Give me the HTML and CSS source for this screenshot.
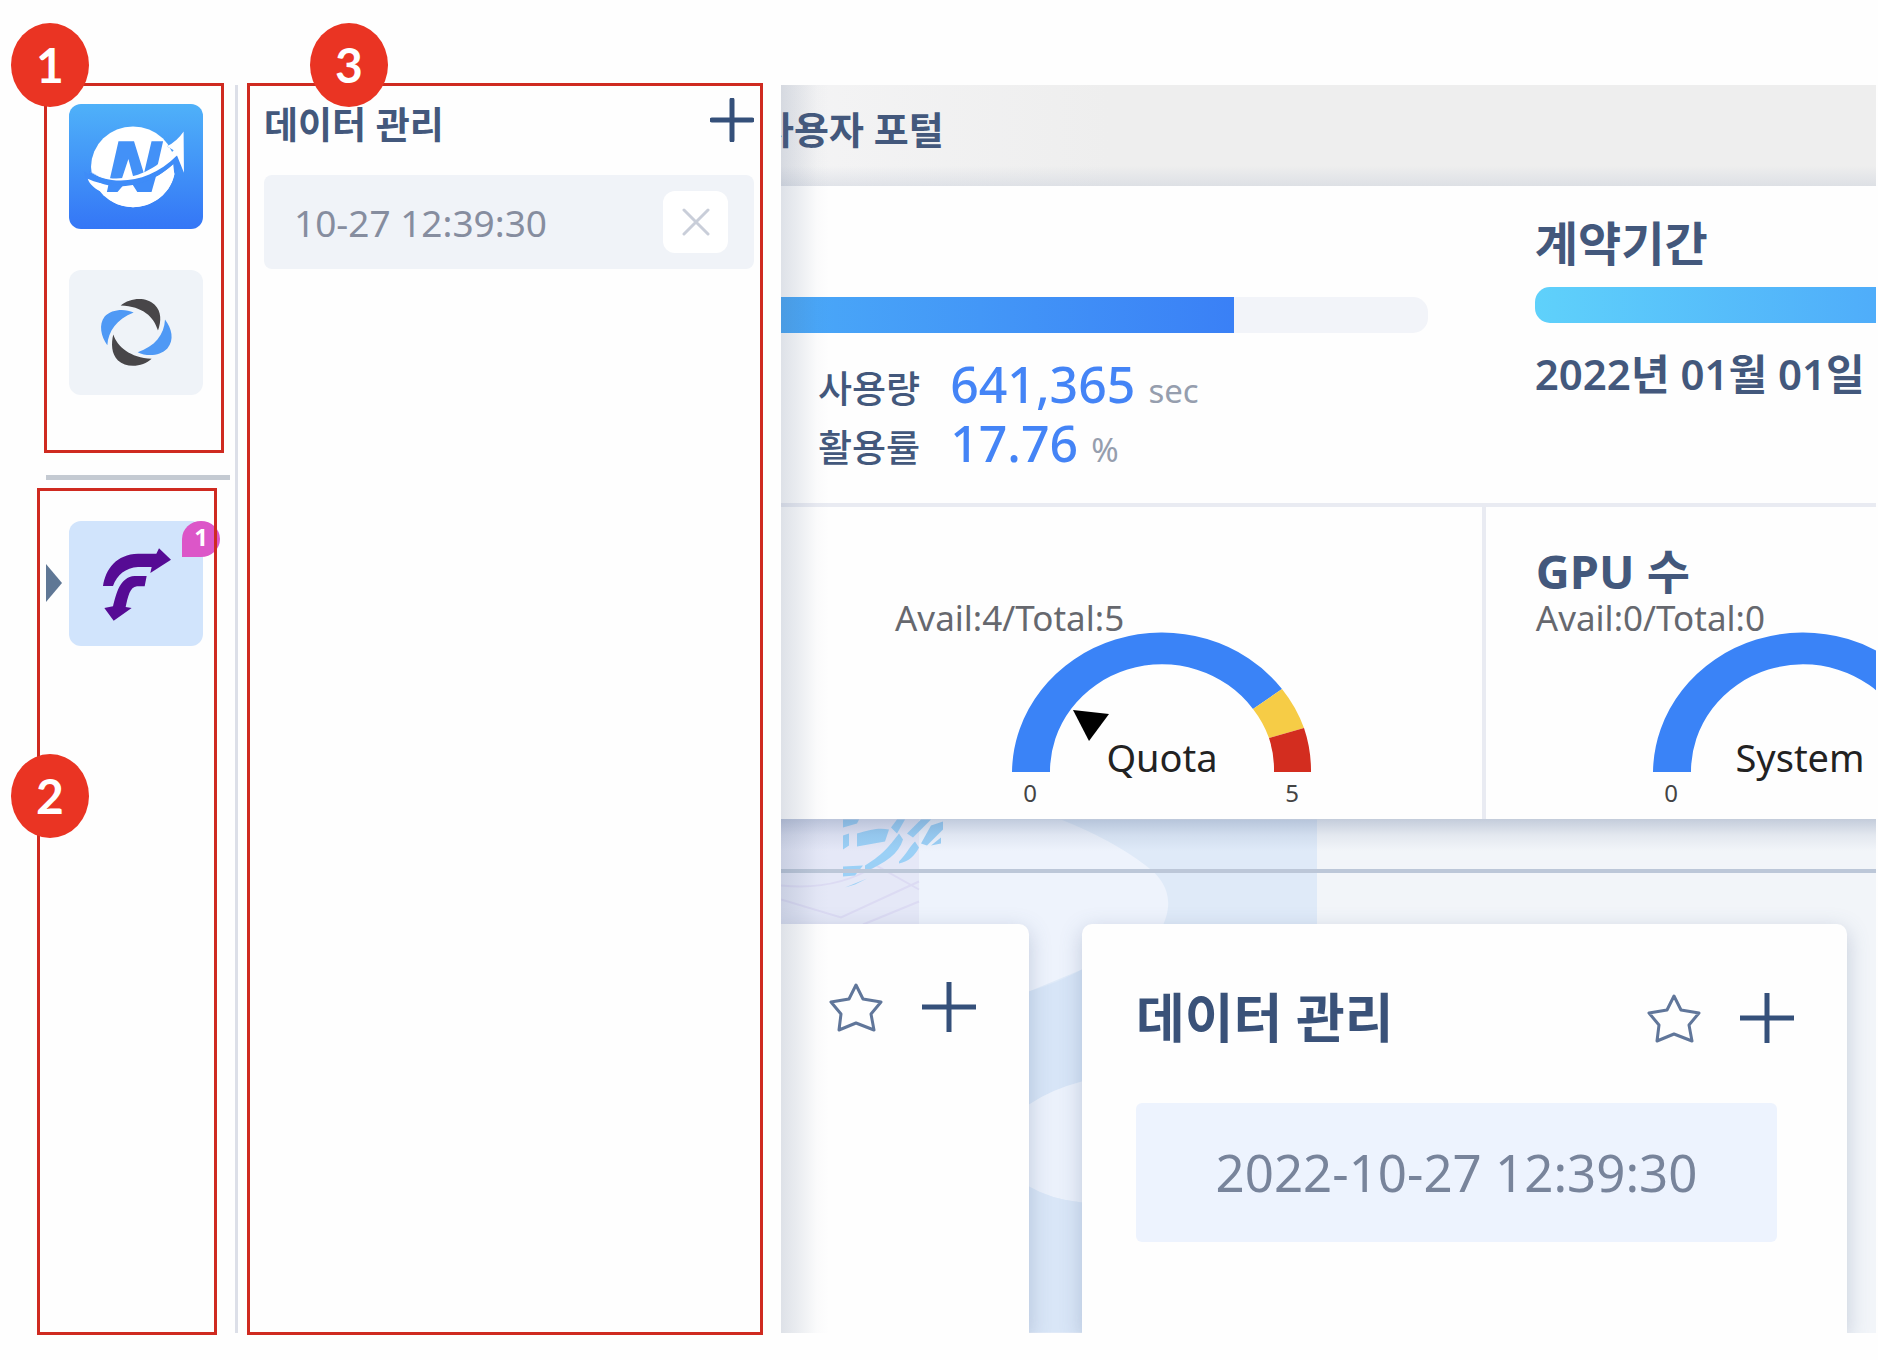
FILE: index.html
```html
<!DOCTYPE html>
<html lang="ko">
<head>
<meta charset="utf-8">
<meta name="viewport" content="width=device-width, initial-scale=1">
<title>사용자 포털</title>
<link rel="stylesheet" href="styles.css">
</head>
<body>
<div class="app">
  <nav class="rail" aria-label="앱">
    <div class="rail-apps">
      <button class="app-icon app-icon-brand" type="button" aria-label="N">
        <svg viewBox="207 312 402 378" aria-hidden="true">
          <ellipse cx="399" cy="502" rx="127" ry="122" fill="#fff"/>
          <path d="M355 425H402L432 522L455 425H490L455 578H412L385 478L352 578H320Z" fill="#4391f7"/>
          <path d="M250 515C330 570 450 545 530 445L548 500C480 565 400 590 300 572L262 556Z" fill="#3f8cf8"/>
          <path d="M262 538C330 570 425 560 519 480L524 525C510 590 450 624 399 624C350 624 320 600 306 578C285 570 268 556 262 538Z" fill="#fff"/>
          <path d="M325 555L375 552L352 578H320ZM395 552L455 530L470 525L455 578H412Z" fill="#3f8cf8"/>
          <path d="M267 514C330 562 440 548 528 456L501 440Q532 425 552 395L553 520L535 480C450 570 340 570 300 550L266 530Z" fill="#3f8cf8"/>
          <path d="M267 516C335 556 440 542 522 452L501 440Q532 425 552 395L553 520L532 468C445 556 330 560 267 516Z" fill="#fff"/>
          <path d="M267 524C330 562 445 562 530 470L534 478C450 574 330 574 267 524Z" fill="#3f8cf8"/>
        </svg>
      </button>
      <button class="app-icon" type="button" aria-label="서비스">
        <svg viewBox="208 812 402 372" aria-hidden="true">
          <g fill="#484649">
            <path d="M363 917C392 893 440 890 465 915C486 935 485 965 475 992C462 950 430 920 363 917Z"/>
            <path d="M341 1004C352 1040 392 1074 456 1077C430 1102 380 1106 355 1082C335 1062 334 1030 341 1004Z"/>
          </g>
          <g fill="#4f99f5">
            <path d="M402 938C375 925 335 928 315 950C296 974 304 1010 323 1036C326 995 350 958 402 938Z"/>
            <path d="M496 959C516 985 525 1020 503 1046C480 1070 440 1070 414 1057C465 1040 494 1005 496 959Z"/>
          </g>
        </svg>
      </button>
      <span class="frame" aria-hidden="true"></span>
      <span class="marker">1</span>
    </div>
    <hr class="rail-line">
    <div class="rail-running">
      <svg class="current" viewBox="0 0 16 38" aria-hidden="true"><path d="M0 0L16 19L0 38Z" fill="#5f7795"/></svg>
      <button class="app-icon app-icon-active" type="button" aria-label="워크플로">
        <svg viewBox="208 242 402 375" aria-hidden="true">
          <g fill="#560b94">
            <path d="M310 437C318 385 350 342 415 340L470 340L478 324L514 358L452 398L456 380L415 380C378 382 352 404 340 437Z"/>
            <path d="M441 407L435 438L412 438C390 440 385 470 378 500L396 503L342 541L314 503L340 498C350 460 360 410 405 407Z"/>
          </g>
        </svg>
        <span class="badge">1</span>
      </button>
      <span class="frame" aria-hidden="true"></span>
      <span class="marker">2</span>
    </div>
  </nav>

  <aside class="panel">
    <header class="panel-head">
      <h2 class="panel-title">데이터 관리</h2>
      <button class="icon-btn panel-add" type="button" aria-label="추가">
        <svg viewBox="0 0 44 44" aria-hidden="true"><path d="M22 2V42M2 22H42" stroke="#35507a" stroke-width="5" stroke-linecap="round"/></svg>
      </button>
    </header>
    <div class="session">
      <span>10-27 12:39:30</span>
      <button class="close" type="button" aria-label="닫기">
        <svg viewBox="0 0 28 28" aria-hidden="true"><path d="M2 2L26 26M26 2L2 26" stroke="#c9ced9" stroke-width="3" stroke-linecap="round"/></svg>
      </button>
    </div>
    <span class="frame" aria-hidden="true"></span>
    <span class="marker">3</span>
  </aside>

  <main class="portal">
    <header class="portal-head"><h1 class="portal-title">사용자 포털</h1></header>

    <section class="summary">
      <div class="cell usage">
        <div class="track"><div class="fill" style="width: 70%"></div></div>
        <dl class="stats">
          <dt>사용량</dt><dd>641,365 <small>sec</small></dd>
          <dt>활용률</dt><dd>17.76 <small>%</small></dd>
        </dl>
      </div>
      <div class="cell contract">
        <h2 class="cell-title">계약기간</h2>
        <div class="period"></div>
        <p class="period-date">2022년 01월 01일</p>
      </div>
      <div class="cell meter meter-plain">
        <p class="avail">Avail:4/Total:5</p>
        <svg class="gauge" viewBox="0 0 300 186" role="img" aria-label="Quota">
          <path d="M0 141A150 141 0 0 1 270 58L241 78A112 107 0 0 0 38 141Z" fill="#3a83f7"/>
          <path d="M270 58A150 141 0 0 1 292 97L257 107A112 107 0 0 0 241 78Z" fill="#f6cc46"/>
          <path d="M292 97A150 141 0 0 1 299 141H262A112 107 0 0 0 257 107Z" fill="#d32d1f"/>
          <path d="M61 79L97 83L77 110Z" fill="#000"/>
          <text class="gauge-name" x="150" y="141">Quota</text>
          <text class="gauge-end" x="18" y="171">0</text>
          <text class="gauge-end" x="280" y="171">5</text>
        </svg>
      </div>
      <div class="cell meter meter-gpu">
        <h2 class="cell-title">GPU 수</h2>
        <p class="avail">Avail:0/Total:0</p>
        <svg class="gauge" viewBox="0 0 300 186" role="img" aria-label="System">
          <path d="M0 141A150 141 0 0 1 270 58L241 78A112 107 0 0 0 38 141Z" fill="#3a83f7"/>
          <text class="gauge-name" x="147" y="141">System</text>
          <text class="gauge-end" x="18" y="171">0</text>
        </svg>
      </div>
    </section>

    <section class="workspace">
      <svg class="backdrop" viewBox="0 0 536 513" aria-hidden="true">
        <rect width="536" height="513" fill="#dfeaf8"/>
        <path d="M0 0H280Q330 20 362 44C394 66 390 90 380 110L301 150L248 172H0Z" fill="#eef3fc"/>
        <path d="M248 172Q280 162 301 150V262Q270 270 248 285Z" fill="#d7e5f7"/>
        <path d="M248 285Q270 270 301 262V383Q270 380 248 367Z" fill="#ebf1fb"/>
        <path d="M248 367Q270 380 301 383V513H248Z" fill="#d9e6f7"/>
        <rect width="138" height="105" fill="#e5e8f7"/>
        <path d="M0 66C40 70 70 62 95 46L138 70M0 80L60 98L138 62M82 105L138 82" fill="none" stroke="#dcdbf3" stroke-width="2"/>
        <path d="M62 0H78L76 4L62 8ZM62 16L68 14V26L62 30ZM76 14C90 10 98 8 108 10L104 22L76 27ZM84 46C104 34 110 24 118 14L122 20C118 34 104 44 84 52ZM62 47L82 46L74 56L62 57ZM64 68L86 59L74 65ZM110 8L116 0H124L116 14ZM118 42C126 34 128 28 134 22L138 28C134 36 128 42 118 44ZM126 14L140 0H150L132 18ZM140 24L150 6L162 2V10L146 26ZM150 26L160 18V24Z" fill="#9bd0f6"/>
      </svg>
      <hr class="workspace-line">
      <div class="cards">
        <article class="card card-partial">
          <header class="card-head">
            <button class="icon-btn" type="button" aria-label="즐겨찾기">
              <svg viewBox="0 0 54 50" aria-hidden="true"><path d="M27 3L34 17L52 20L42 32L45 48L27 41L10 48L12 32L2 20L20 17Z" fill="none" stroke="#60769a" stroke-width="3" stroke-linejoin="round"/></svg>
            </button>
            <button class="icon-btn" type="button" aria-label="추가">
              <svg viewBox="0 0 54 50" aria-hidden="true"><path d="M27 0V50M0 25H54" stroke="#35507a" stroke-width="5"/></svg>
            </button>
          </header>
        </article>
        <article class="card card-data">
          <header class="card-head">
            <h2 class="card-title">데이터 관리</h2>
            <button class="icon-btn" type="button" aria-label="즐겨찾기">
              <svg viewBox="0 0 54 50" aria-hidden="true"><path d="M27 3L34 17L52 20L42 32L45 48L27 41L10 48L12 32L2 20L20 17Z" fill="none" stroke="#60769a" stroke-width="3" stroke-linejoin="round"/></svg>
            </button>
            <button class="icon-btn" type="button" aria-label="추가">
              <svg viewBox="0 0 54 50" aria-hidden="true"><path d="M27 0V50M0 25H54" stroke="#35507a" stroke-width="5"/></svg>
            </button>
          </header>
          <div class="entry">2022-10-27 12:39:30</div>
        </article>
      </div>
    </section>
  </main>
</div>
</body>
</html>
```
FILE: styles.css
```css
* { box-sizing: border-box; }

body {
  margin: 0;
  background: #fefefe;
  color: #43587c;
  font-family: "Noto Sans", "Noto Sans CJK KR", sans-serif;
}

h1, h2, p, dl, dd, hr { margin: 0; }
svg { display: block; }
button { border: 0; padding: 0; background: none; font: inherit; color: inherit; cursor: pointer; }

.app {
  display: flex;
  min-height: 100vh;
  padding: 85px 2px 27px 46px;
}

/* numbered call-outs */
.frame {
  position: absolute;
  border: 3px solid #cf2a20;
  pointer-events: none;
}
.marker {
  position: absolute;
  display: grid;
  place-items: center;
  width: 78px;
  height: 84px;
  border-radius: 50%;
  background: #ea3423;
  color: #fff;
  font: 700 48px/1 Lato, sans-serif;
}

/* left rail */
.rail {
  display: flex;
  flex-direction: column;
  flex: 0 0 192px;
  border-right: 3px solid #dcdfe8;
}
.rail-apps {
  position: relative;
  display: flex;
  flex-direction: column;
  gap: 41px;
  padding: 19px 0 80px 23px;
}
.rail-apps .frame { inset: -2px 11px 22px -2px; }
.rail-apps .marker { left: -35px; top: -62px; }
.app-icon {
  position: relative;
  width: 134px;
  height: 125px;
  border-radius: 12px;
  background: #eff3f8;
}
.app-icon svg { width: 100%; height: 100%; }
.app-icon-brand { background: linear-gradient(#4fb1f9, #3476f6); }
.app-icon-active { background: #d1e4fc; }
.rail-line {
  width: 184px;
  height: 5px;
  border: 0;
  background: #c4cad2;
}
.rail-running {
  position: relative;
  flex: 1;
  padding: 41px 0 0 23px;
}
.rail-running .frame { inset: 8px 18px -2px -9px; }
.rail-running .marker { left: -35px; top: 274px; }
.current {
  position: absolute;
  left: 0;
  top: 84px;
  width: 16px;
  height: 38px;
}
.badge {
  position: absolute;
  right: -17px;
  top: 0;
  width: 38px;
  height: 36px;
  border-radius: 50% 50% 50% 0;
  background: #dc56c8;
  color: #fff;
  font-size: 24px;
  font-weight: 700;
  line-height: 32px;
}

/* data panel */
.panel {
  position: relative;
  flex: 0 0 543px;
  padding: 13px 27px 0 26px;
}
.panel .frame { inset: -2px 18px -2px 9px; }
.panel .marker { left: 72px; top: -62px; }
.panel-head {
  display: flex;
  align-items: flex-start;
  justify-content: space-between;
  height: 54px;
}
.panel-title { font-size: 37px; line-height: 54px; }
.panel-add svg { width: 44px; height: 44px; }
.session {
  display: flex;
  align-items: center;
  justify-content: space-between;
  height: 94px;
  margin-top: 23px;
  padding: 0 26px 0 30px;
  border-radius: 8px;
  background: #f0f3f8;
  color: #868d9f;
  font-size: 37px;
}
.close {
  display: grid;
  place-items: center;
  width: 65px;
  height: 62px;
  border-radius: 12px;
  background: #fff;
}
.close svg { width: 28px; height: 28px; }

/* portal */
.portal {
  position: relative;
  display: flex;
  flex-direction: column;
  flex: 1;
  min-width: 0;
  overflow: hidden;
}
.portal::after {
  content: "";
  position: absolute;
  z-index: 3;
  inset: 0 auto 0 0;
  width: 48px;
  background: linear-gradient(90deg, rgba(75, 95, 130, .18), rgba(75, 95, 130, .11) 35%, rgba(75, 95, 130, .02) 75%, transparent);
  pointer-events: none;
}
.portal-head {
  display: flex;
  justify-content: flex-start;
  height: 101px;
  background:
    linear-gradient(transparent 80%, rgba(190, 198, 212, .35)),
    linear-gradient(90deg, #f4f4f5, #eee 30%);
}
.portal-title {
  margin-left: -22px;
  font-size: 38px;
  line-height: 88px;
  white-space: nowrap;
}

.summary {
  position: relative;
  z-index: 1;
  display: grid;
  grid-template-columns: 64% 1fr;
  background: #fefefe;
}
.summary::after {
  content: "";
  position: absolute;
  inset: 100% 0 auto;
  height: 32px;
  background: linear-gradient(rgba(75, 98, 140, .28), rgba(75, 98, 140, .09) 50%, transparent);
}
.cell { min-width: 0; white-space: nowrap; }
.cell-title { font-size: 47px; line-height: 60px; }
.usage, .contract { border-bottom: 4px solid #e9ebf2; }
.usage { padding: 111px 54px 0 0; }
.track {
  height: 36px;
  overflow: hidden;
  border-radius: 0 15px 15px 0;
  background: #f2f4f9;
}
.fill { height: 100%; background: linear-gradient(90deg, #4aa9f8, #3a80f6); }
.stats {
  display: grid;
  grid-template-columns: max-content 1fr;
  column-gap: 30px;
  align-items: baseline;
  margin-top: 25px;
  padding-left: 37px;
  font-size: 37px;
  font-weight: 500;
  line-height: 52px;
}
.stats dd { color: #4484f6; font-size: 50px; }
.stats small { color: #969eae; font-size: 33px; font-weight: 400; }
.contract { padding: 27px 0 105px 53px; }
.period {
  height: 36px;
  margin-top: 14px;
  border-radius: 15px 0 0 15px;
  background: linear-gradient(90deg, #5fd1fb, #4fadfa);
}
.period-date {
  margin-top: 27px;
  font-size: 42px;
  font-weight: 600;
  line-height: 48px;
}
.meter { padding: 34px 0 2px 50px; }
.meter-plain { padding: 94px 0 0 114px; }
.meter-gpu { border-left: 4px solid #e9ebf2; overflow: hidden; }
.avail {
  color: #66686e;
  font-size: 35px;
  line-height: 34px;
}
.gauge {
  width: 300px;
  height: 186px;
  margin: -4px 0 0 117px;
}
.gauge-name { fill: #222; font-size: 38px; text-anchor: middle; }
.gauge-end { fill: #444; font-size: 24px; text-anchor: middle; }

/* workspace */
.workspace {
  position: relative;
  display: flex;
  flex-direction: column;
  flex: 1;
  padding-top: 50px;
  background: #f2f5f9;
}
.backdrop {
  position: absolute;
  left: 0;
  top: 0;
  width: 536px;
  height: 514px;
}
.workspace-line {
  position: relative;
  width: 100%;
  height: 4px;
  border: 0;
  background: #bcc7d8;
}
.cards {
  position: relative;
  display: flex;
  flex: 1;
  gap: 53px;
  margin-top: 51px;
  padding-right: 29px;
}
.card {
  border-radius: 10px 10px 0 0;
  background: #fefefe;
  box-shadow: 0 6px 22px rgba(75, 98, 140, .28);
}
.card-partial {
  flex: 0 0 248px;
  padding: 53px 53px 0 0;
  border-top-left-radius: 0;
}
.card-data { flex: 1; padding: 64px 53px 0 54px; }
.card-head {
  display: flex;
  align-items: center;
  justify-content: flex-end;
  gap: 39px;
  height: 60px;
}
.card-head svg { width: 54px; height: 50px; }
.card-title {
  margin-right: auto;
  color: #3a5279;
  font-size: 53px;
  line-height: 60px;
  white-space: nowrap;
}
.entry {
  height: 139px;
  margin: 55px 17px 0 0;
  border-radius: 6px;
  background: #edf3fe;
  color: #78849b;
  font-size: 51px;
  line-height: 139px;
  text-align: center;
  white-space: nowrap;
}
```
